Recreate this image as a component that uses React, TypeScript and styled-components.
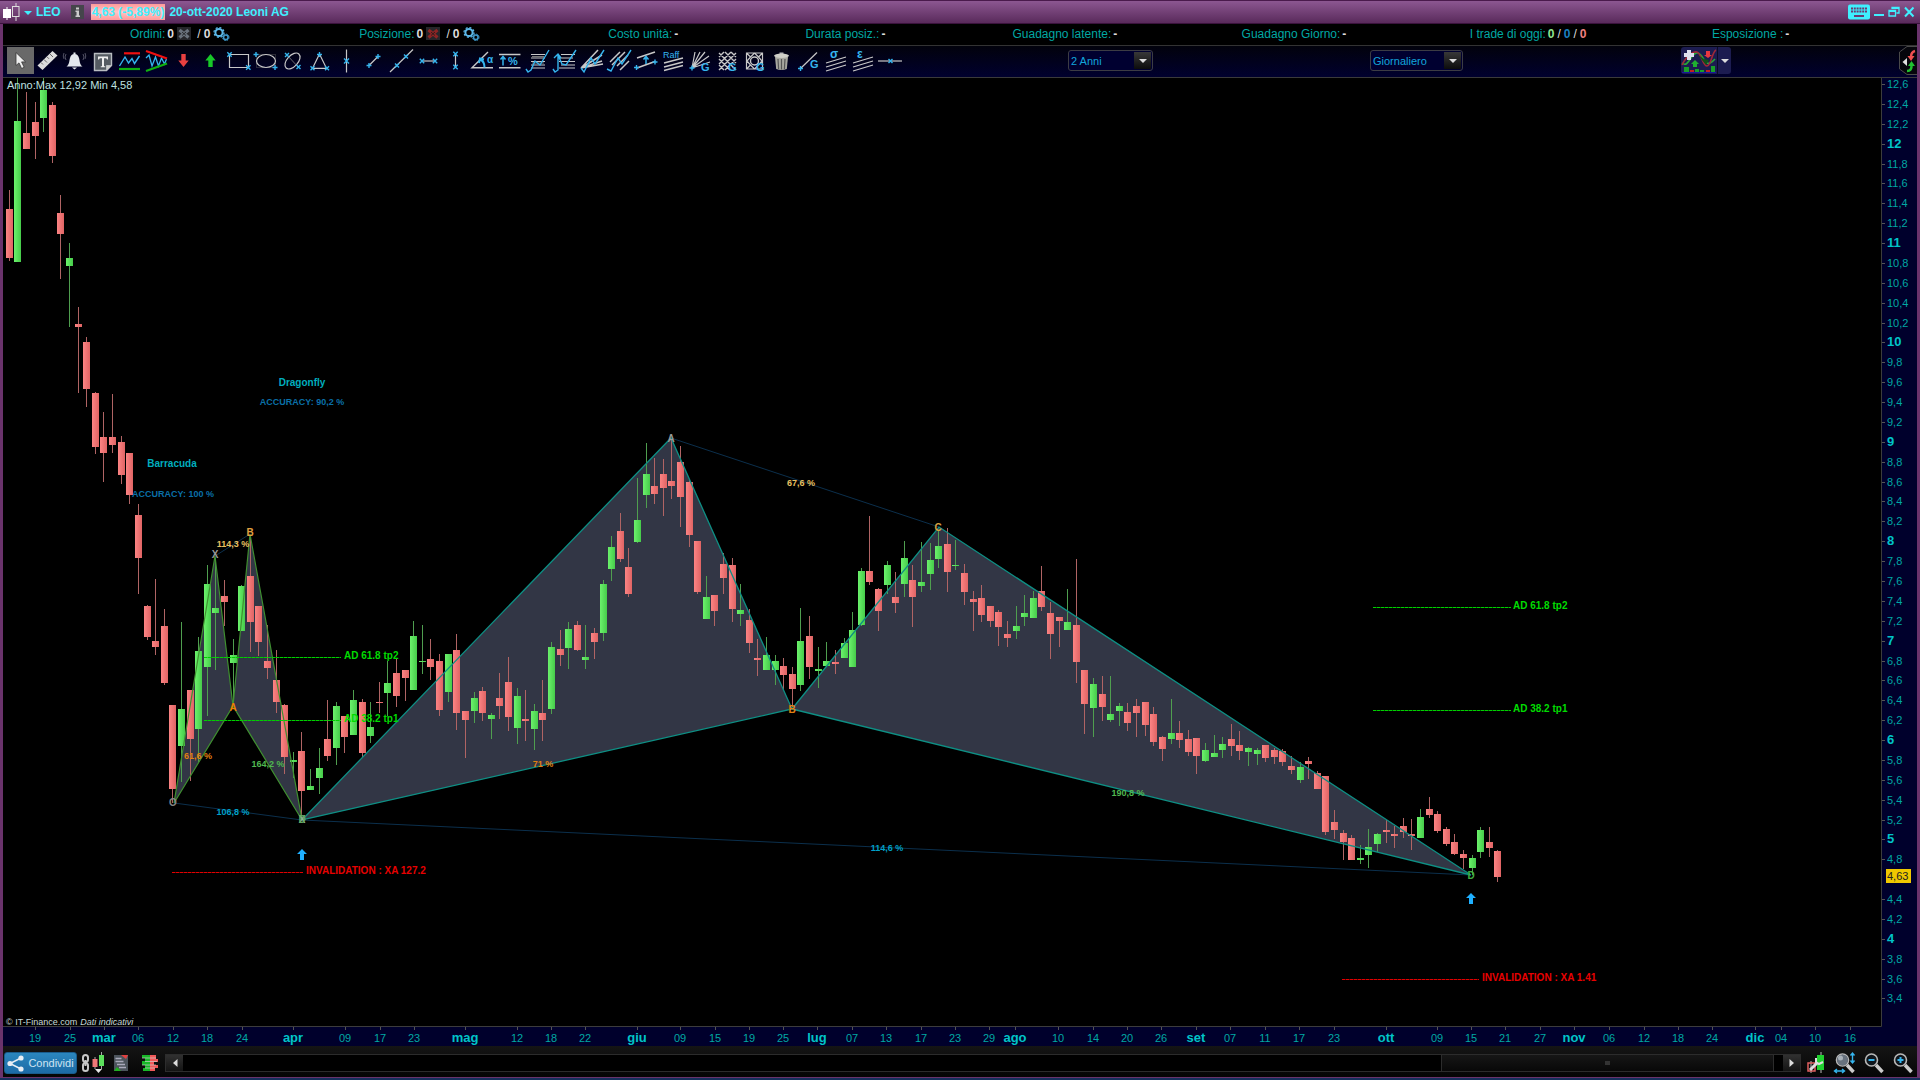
import React from 'react';
import styled, { createGlobalStyle, css } from 'styled-components';

const GlobalStyle = createGlobalStyle`
  * { box-sizing: border-box; }
  body { margin: 0; background: #000; font-family: "Liberation Sans", Arial, sans-serif; }
  button, select { font-family: inherit; }
`;

const palette = {
  teal: '#00a8a4',
  cyan: '#3ff0ff',
  grey: '#c8c8c8',
  blue: '#35b5ee',
};

/* ---------- frame ---------- */

const Desktop = styled.div`
  display: flex;
  flex-direction: column;
  min-height: 100vh;
  background: #16305c;
  padding-bottom: 2px;
`;

const Frame = styled.main`
  flex: 1;
  display: flex;
  flex-direction: column;
  border: solid #6a336c;
  border-width: 0 3px 1px 3px;
  background: #000;
`;

const TitleBar = styled.header`
  display: flex;
  align-items: center;
  height: 24px;
  margin: 0 -3px;
  padding: 0 5px 0 3px;
  background: linear-gradient(#8c5791, #592a5b);
  border-top: 1px solid #4a1a4c;
  border-bottom: 1px solid #3a123c;
  color: ${palette.cyan};
  font-size: 12px;
  font-weight: bold;
`;

const PlainButton = styled.button`
  display: inline-flex;
  align-items: center;
  justify-content: center;
  padding: 0;
  border: 0;
  background: none;
  color: inherit;
`;

const Symbol = styled.h1`
  margin: 0 10px 0 3px;
  font-size: 12px;
`;

const Change = styled.strong`
  margin: 0 4px 0 7px;
  padding: 0 1px;
  line-height: 16px;
  background: linear-gradient(#ff9a9a, #ffc4c4, #ff9a9a);
`;

const WindowButtons = styled.div`
  display: flex;
  align-items: center;
  gap: 3px;
  margin-left: auto;
`;

/* ---------- statistics row ---------- */

const StatRow = styled.dl`
  display: grid;
  grid-template-columns: 229fr 249fr 197fr 207fr 229fr 228fr 242fr 205fr;
  align-items: center;
  height: 22px;
  margin: 0;
  padding: 0 0 2px 127px;
  border-bottom: 1px solid #333;
  font-size: 12px;
  white-space: nowrap;
`;

const Stat = styled.div`
  display: flex;
  align-items: center;
  gap: 2px;
`;

const StatName = styled.dt`
  color: ${palette.teal};
`;

const StatValue = styled.dd`
  display: flex;
  align-items: center;
  gap: 3px;
  margin: 0;
  color: #ddd;
`;

const Count = styled.b<{ $color?: string }>`
  color: ${(p) => p.$color ?? '#ddd'};
`;

/* ---------- toolbar ---------- */

const Toolbar = styled.div`
  display: flex;
  align-items: center;
  height: 32px;
  padding: 0 0 2px 4px;
  background: linear-gradient(#02020c, #00002e);
  border-bottom: 1px solid #3a3a3a;
`;

const Tools = styled.div`
  display: flex;
  justify-content: space-between;
  width: 897px;
`;

const Tool = styled(PlainButton)<{ $active?: boolean }>`
  width: 27px;
  height: 27px;
  ${(p) => p.$active && css`background: #696969;`}

  svg { overflow: visible; }
`;

const Spacer = styled.div<{ $grow: number }>`
  flex: ${(p) => p.$grow} 1 0;
`;

const PickerBox = styled.div<{ $width: number }>`
  position: relative;
  width: ${(p) => p.$width}px;
  height: 21px;
`;

const Picker = styled.select`
  appearance: none;
  width: 100%;
  height: 100%;
  padding: 0 20px 0 2px;
  border: 1px solid #3c3c44;
  border-radius: 3px;
  background: #000030;
  color: #12a5dc;
  font-size: 11px;
`;

const PickerArrow = styled.span`
  position: absolute;
  top: 2px;
  right: 2px;
  display: grid;
  place-items: center;
  width: 17px;
  height: 17px;
  background: linear-gradient(#383838, #0c0c0c);
  pointer-events: none;
`;

const Triangle = styled.i`
  border: 4px solid transparent;
  border-top-color: #ddd;
  border-bottom: 0;
`;

const IndicatorGroup = styled.div`
  display: flex;
  height: 27px;
  border-radius: 3px;
  overflow: hidden;
  background: #1c1c50;
`;

const IndicatorMore = styled(PlainButton)`
  width: 14px;
  border-left: 1px solid #0a0a24;
`;

/* ---------- chart ---------- */

const ChartArea = styled.section`
  flex: 1;
  display: flex;
`;

const ChartSvg = styled.svg`
  flex: 1;
  width: 100%;
  min-width: 0;
  display: block;
  font-size: 11px;
`;

/* ---------- bottom bar ---------- */

const BottomBar = styled.footer`
  display: flex;
  align-items: center;
  height: 31px;
  padding: 3px 0 0 1px;
  background: linear-gradient(#151515, #050505);
`;

const ShareButton = styled(PlainButton)`
  gap: 4px;
  width: 73px;
  height: 22px;
  margin-right: 4px;
  border: 1px solid #1a5c8c;
  border-radius: 3px;
  background: linear-gradient(#2b86bd, #1c6ba6);
  color: #cfe4f2;
  font-size: 11px;
`;

const BarTool = styled(PlainButton)<{ $width?: number }>`
  width: ${(p) => p.$width ?? 29}px;
  height: 28px;
`;

const ScrollBar = styled.div`
  flex: 1;
  display: flex;
  height: 18px;
  border: 1px solid #2c2c2c;
  background: #000;
`;

const ScrollButton = styled(PlainButton)`
  width: 17px;
  background: linear-gradient(#303030, #141414);
`;

const ScrollTrack = styled.div`
  flex: 1;
  display: flex;
`;

const ScrollThumb = styled.div`
  display: grid;
  place-items: center;
  flex: 331;
  border: solid #2c2c2c;
  border-width: 0 1px;
  background: linear-gradient(#161616, #080808);
`;

const Grip = styled.i`
  width: 5px;
  height: 4px;
  background: #333;
`;

/* ---------- icons ---------- */

const W = palette.grey;
const C = palette.blue;

const Cross = ({ x, y, r = 2 }: { x: number; y: number; r?: number }) => (
  <path d={`M${x - r} ${y - r}l${2 * r} ${2 * r}M${x - r} ${y + r}l${2 * r} ${-2 * r}`} stroke={C} strokeWidth="1.4" />
);
const Plus = ({ x, y, r = 2.5 }: { x: number; y: number; r?: number }) => (
  <path d={`M${x - r} ${y}h${2 * r}M${x} ${y - r}v${2 * r}`} stroke={C} strokeWidth="1.4" />
);
const Line = ({ d, c = W, w = 1.2 }: { d: string; c?: string; w?: number }) => (
  <path d={d} stroke={c} strokeWidth={w} fill="none" />
);
const Mark = ({ x, y, s = 11, children }: { x: number; y: number; s?: number; children: string }) => (
  <text x={x} y={y} fill={C} fontSize={s} fontWeight="bold">{children}</text>
);

const tools: { name: string; art: React.ReactNode }[] = [
  { name: 'Cursore', art: <path d="M9 5.5v13l3-2.6 2.6 5.6 2.6-1.2-2.6-5.4h4z" fill="#eee" stroke="#333" strokeWidth=".8" /> },
  { name: 'Righello', art: <><path d="M3.5 18.5L18.5 4l5 4.5L8.5 23z" fill="#ddd" /><Line d="M7 15.5l2 2M10 12.5l3 3M13 9.8l2 2M16 7l3 3" c="#666" w={1} /></> },
  { name: 'Allarme', art: <><path d="M5.5 19.5c3-2 2.500-5 3.500-8.500.8-2.800 2-4 4.500-4s3.700 1.200 4.500 4c1 3.500.5 6.500 3.500 8.500z" fill="#e4e8ec" /><path d="M11 20.500h5l-2.500 2zM12.500 5.500h2v2h-2z" fill="#e4e8ec" /><Line d="M5 7q-2 3 0 6M22 7q2 3 0 6M3 6q-1.500 3 0 6M24 6q1.500 3 0 6" c="#667" w={.8} /></> },
  { name: 'Testo', art: <><path d="M5.500 6.500h17v12l-5 5h-12z" fill="#555b62" stroke="#b8bcc0" strokeWidth="1.400" /><path d="M17.500 23.500v-5h5" fill="#ccc" stroke="#b8bcc0" /><path d="M9 9.500h10v3h-1l-.8-1.300H15v8h1.200v1h-4.400v-1H13v-8h-2.200L10 12.500H9z" fill="#eee" /></> },
  { name: 'Supporti e resistenze', art: <><Line d="M3.500 19L9 10l3.500 6 3.500-4.500 2.500 5L23.500 9" c={C} w={1.400} /><Line d="M8 6.300h16" c="#f01010" w={2.200} /><Line d="M3 22h21" c="#10b010" w={2.200} /></> },
  { name: 'Canale', art: <><Line d="M3 11l3-3 3 11 3.500-9 3 9 3-8 3 6 2-5" c={C} w={1.300} /><Line d="M3 4l21 7.500" c="#f01010" w={2.200} /><Line d="M3 24l21-7.500" c="#10b010" w={2.200} /></> },
  { name: 'Freccia giù', art: <path d="M11.300 7h4.400v6.500h3L13.500 20l-5.200-6.500h3z" fill="#e84040" /> },
  { name: 'Freccia su', art: <path d="M11.300 20h4.400v-6.500h3L13.500 7l-5.200 6.500h3z" fill="#18c828" /> },
  { name: 'Rettangolo', art: <><Line d="M4.500 7.500h19v13h-19z" /><Cross x={4.500} y={7.500} r={2.200} /><Cross x={23.300} y={20.500} r={2.200} /></> },
  { name: 'Ellisse', art: <><path d="M4.500 7.500h19v13h-19z" fill="none" stroke="#555" strokeDasharray="1 1" /><ellipse cx="14" cy="14" rx="9.500" ry="6.500" fill="none" stroke={W} strokeWidth="1.200" /><Plus x={4} y={7.500} /><Plus x={23} y={20.500} /></> },
  { name: 'Ellisse inclinata', art: <><ellipse cx="13.500" cy="14" rx="9.500" ry="5.500" transform="rotate(-48 13.500 14)" fill="none" stroke={W} strokeWidth="1.200" /><Line d="M8 8l12 13" c="#888" w={.8} /><Cross x={8} y={8} /><Cross x={19.500} y={20} /></> },
  { name: 'Triangolo', art: <><Line d="M13.500 7L6.500 21.300h14z" /><Plus x={13.500} y={7.500} /><Cross x={6.500} y={21.300} /><Cross x={21} y={21.300} /></> },
  { name: 'Retta verticale', art: <><Line d="M13.500 2.500v23" /><Cross x={13.500} y={14} r={2.500} /></> },
  { name: 'Segmento', art: <><Line d="M9 18.500l9-9" /><Plus x={9} y={18.500} /><Plus x={18} y={9.500} /></> },
  { name: 'Retta', art: <><Line d="M2 25L25 2.500" /><Cross x={9} y={18.500} /><Cross x={18} y={9.500} /></> },
  { name: 'Segmento orizzontale', art: <><Line d="M7 14h14" /><Cross x={7} y={14} r={2.200} /><Cross x={20} y={14} r={2.200} /></> },
  { name: 'Segmento verticale', art: <><Line d="M13.500 7v14" /><Cross x={13.500} y={7} r={2.200} /><Cross x={13.500} y={20} r={2.200} /></> },
  { name: 'Angolo', art: <><Line d="M19 5L3 20.700h21" w={1.400} /><path d="M11 12.500q4.500 1.500 4.500 8M10 16l1-4.500 4 1" stroke={C} strokeWidth="2" fill="none" /><Mark x={18} y={16} s={10}>α</Mark></> },
  { name: 'Variazione percentuale', art: <><Line d="M3 7.500h21.500M3 20.700h21.500" w={1.400} /><Line d="M7 18.500V11M4.500 12.500L7 9.500l2.500 3" c={C} w={1.500} /><Mark x={12} y={18} s={11}>%</Mark></> },
  { name: 'Ritracciamenti', art: <><Line d="M7 7.500h14M7 11h14M7 14.500h14M7 18h14M7 21h14" w={1} /><Line d="M8 9.500h12M8 16h12" c="#777" w={1} /><Line d="M2 22l2 3 3-2 4-9 5 4 9-15" c={C} w={1.400} /></> },
  { name: 'Estensioni', art: <><Line d="M10 7.500h14M8 11h14M8 14.500h16M10 18h14M8 21h16" w={1} /><Line d="M2 22l2 3 3-2V8l4 9 4 1L25 3M3 11l4-4 3 4" c={C} w={1.400} /></> },
  { name: 'Ventaglio', art: <><Line d="M3 21L20 3M3 21L24 8M3 21l21-7M3 21l22-4" w={1.500} /><Line d="M3 21l3 4 7-14 4 6 9-14" c={C} w={1.400} /></> },
  { name: 'Canale parallelo', art: <><Line d="M5 15L15 5M7 18L20 5M12 19L23 8M15 23l9-9" w={1.500} /><Line d="M2 22l4 2 7-13 4 6 9-14" c={C} w={1.400} /></> },
  { name: 'Trasla canale', art: <><Line d="M5 11l18-6M5 21l18-6.500" w={1.500} /><Line d="M14 17v-6M11.500 12.500l2.500-3 2.500 3" c={C} w={1.500} /><Plus x={4.500} y={20.500} /><Plus x={23} y={15} /></> },
  { name: 'Raff', art: <><text x="3" y="11" fill={C} fontSize="9">Raff</text><Line d="M4 16l19-5M4 20l19-5M4 23.500l19-5" w={1.400} /></> },
  { name: 'Ventaglio di Gann', art: <><Line d="M5 21L8 5M5 21l8-16M5 21L18 5M5 21l17-12M5 21l18-6" w={1.200} /><Plus x={5} y={21} /><Mark x={14} y={24}>G</Mark></> },
  { name: 'Griglia di Gann', art: <><Line d="M5 10l5-5M5 17L17 5M5 23L22 6M11 23L22 12M5 6l17 17M11 5l11 11M5 12l11 11M17 5l5 5M5 18l5 5" w={1.400} /><Mark x={14} y={24}>G</Mark></> },
  { name: 'Quadrato di Gann', art: <><Line d="M5.500 6h16v16h-16zM5.500 6l4 4M21.500 6l-4 4M5.500 22l4-4M13.500 6l4 4 3.500 4-3.500 4-4 4-4-4-3.500-4 3.500-4z" w={1.200} /><circle cx="13.500" cy="14" r="4" fill="none" stroke={W} strokeWidth="1.400" /><Mark x={15} y={24}>G</Mark></> },
  { name: 'Elimina', art: <><path d="M7 10h13l-1.200 12q-5.300 2-10.600 0z" fill="#a8a8a0" /><ellipse cx="13.500" cy="8.800" rx="7.500" ry="2.200" fill="#d0d0c8" /><path d="M11.500 5.500h4v1.500h-4z" fill="#bbb" /><Line d="M10 12l.6 10M13.500 12v10.500M17 12l-.6 10" c="#555" /></> },
  { name: 'Retta di Gann', art: <><Line d="M5.500 21.500L22 5.500" /><Plus x={5.500} y={21.500} /><Mark x={15} y={21}>G</Mark></> },
  { name: 'Deviazione standard', art: <><Mark x={7} y={11} s={12}>σ</Mark><Line d="M3 16l20-6M3 20l20-6M3 24l20-6" w={1.300} /></> },
  { name: 'Errore standard', art: <><Mark x={7} y={11} s={12}>ε</Mark><Line d="M3 16l20-6M3 20l20-6M3 24l20-6" w={1.300} /></> },
  { name: 'Retta orizzontale', art: <><Line d="M1 14h24" /><Cross x={13.500} y={14} /></> },
];

const Gears = () => (
  <svg width="17" height="14" viewBox="0 0 17 14" aria-hidden="true">
    <circle cx="6" cy="5.500" r="3.600" fill="none" stroke="#5cb8e8" strokeWidth="2" />
    <circle cx="6" cy="5.500" r="5" fill="none" stroke="#5cb8e8" strokeWidth="1.200" strokeDasharray="2 1.900" />
    <circle cx="12.800" cy="10.300" r="2.300" fill="none" stroke="#3f97c8" strokeWidth="1.600" />
    <circle cx="12.800" cy="10.300" r="3.300" fill="none" stroke="#3f97c8" strokeDasharray="1.400 1.200" />
  </svg>
);

const CancelIcon = ({ color }: { color: string }) => (
  <svg width="14" height="13" viewBox="0 0 14 13" aria-hidden="true">
    <rect width="14" height="13" fill="#26262a" />
    <path d="M2.500 3l9 7.500M2.500 10.500l9-7.500" stroke={color} strokeWidth="3.200" />
    <path d="M5 5l4 3.500M5 8.500L9 5" stroke="#1a1a1c" strokeWidth=".8" />
  </svg>
);

/* ---------- chart data ---------- */

/* direction, high, body top, body bottom, low */
type Bar = [0 | 1, number, number, number, number];

const bars: Bar[] = [
  [0,190,209,258,261],[1,78,121,262,262],[0,92,133,149,149],[0,102,122,136,159],[1,78,90,118,132],[0,102,105,156,163],
  [0,195,213,234,279],[1,243,258,266,327],[0,307,324,327,393],[0,337,342,389,407],[0,392,393,447,454],[0,412,437,453,482],
  [0,394,437,445,453],[0,436,442,475,484],[0,453,453,495,504],[0,504,515,558,594],[0,605,606,637,640],[0,579,641,647,655],
  [0,609,626,683,685],[0,705,705,789,803],[1,622,709,746,782],[0,690,690,739,781],[1,637,651,729,762],[1,565,584,667,716],
  [1,558,608,613,670],[0,580,596,602,626],[1,639,655,663,703],[1,585,586,631,631],[0,537,576,622,652],[0,606,606,642,656],
  [0,625,661,668,679],[0,650,680,702,713],[0,704,705,757,774],[1,752,760,762,778],[0,732,751,791,818],[1,769,786,790,790],
  [1,748,768,778,794],[0,700,739,756,761],[1,702,706,748,765],[0,716,716,737,753],[1,690,700,735,735],[0,699,702,753,757],
  [1,702,727,736,743],[0,682,702,703,713],[1,661,683,693,716],[0,659,673,696,707],[0,670,670,678,701],[1,621,636,690,690],
  [1,625,661,662,674],[0,639,659,667,680],[0,654,661,710,716],[1,654,654,692,702],[0,634,650,713,730],[0,711,711,720,758],
  [1,692,698,711,723],[0,687,691,713,721],[1,713,715,719,739],[0,673,698,706,719],[0,657,682,717,731],[1,688,696,728,744],
  [0,690,719,721,741],[1,704,711,729,750],[0,680,713,720,741],[1,642,647,709,714],[0,630,649,655,666],[1,622,629,648,669],
  [0,621,625,650,651],[1,625,657,660,669],[0,628,633,642,659],[1,580,584,633,641],[1,536,547,569,581],[0,513,531,559,562],
  [0,548,567,594,597],[1,478,520,542,543],[1,443,474,495,508],[0,458,486,494,504],[0,459,474,488,516],[0,440,481,486,499],
  [0,446,462,497,527],[0,480,482,535,547],[0,541,541,592,594],[1,576,597,619,619],[0,595,595,611,626],[0,553,564,578,594],
  [0,558,565,609,622],[1,584,610,614,626],[0,609,620,643,653],[0,639,658,660,676],[1,637,655,670,670],[1,655,661,670,685],
  [0,658,666,675,690],[0,667,674,689,707],[1,608,641,685,691],[0,616,636,667,679],[1,647,669,671,688],[1,642,661,666,666],
  [0,650,662,664,674],[1,638,643,658,658],[1,612,630,667,667],[1,568,571,625,626],[0,516,571,582,585],[0,588,589,611,631],
  [1,561,565,585,594],[0,572,597,603,613],[1,541,558,584,597],[0,565,580,597,627],[1,542,582,586,592],[1,543,560,574,590],
  [1,530,546,559,568],[0,528,544,572,592],[1,540,565,566,570],[0,564,573,592,605],[0,591,599,602,631],[0,585,598,615,622],
  [0,606,606,621,627],[0,610,612,627,646],[0,621,634,638,647],[1,606,626,631,639],[1,595,613,617,626],[1,591,598,618,618],
  [0,566,591,607,611],[0,602,613,634,659],[0,617,617,621,647],[1,589,622,630,630],[0,559,625,662,683],[0,670,670,704,734],
  [1,678,684,708,737],[0,676,694,707,721],[1,676,714,720,722],[1,703,706,711,726],[0,703,712,723,731],[0,699,706,713,737],
  [0,702,702,725,736],[0,707,714,742,746],[0,736,737,749,761],[1,699,733,739,744],[0,721,733,740,748],[0,730,739,752,756],
  [0,738,738,756,774],[1,743,750,761,762],[1,735,753,757,757],[1,737,744,750,758],[0,724,739,746,756],[0,731,745,751,760],
  [1,747,748,752,766],[1,748,750,754,765],[0,745,745,758,762],[0,748,750,757,764],[0,749,751,762,766],[0,756,766,770,774],
  [1,762,767,780,783],[0,757,761,764,779],[0,771,773,789,789],[0,776,776,832,835],[0,810,822,830,839],[0,830,833,842,860],
  [0,835,838,860,860],[1,845,858,860,864],[1,829,847,855,868],[1,833,834,844,852],[0,820,830,832,843],[0,826,834,836,848],
  [0,818,826,832,838],[0,819,834,836,850],[1,809,817,838,838],[0,797,809,815,818],[0,811,814,831,833],[0,827,829,844,846],
  [0,834,842,854,855],[0,850,854,858,869],[1,855,858,868,875],[1,827,830,852,858],[0,827,842,848,857],[0,850,851,877,882],
];

const dates: [string, number][] = [
  ['19',35],['25',70],['mar',104],['06',138],['12',173],['18',207],['24',242],['apr',293],['09',345],['17',380],['23',414],
  ['mag',465],['12',517],['18',551],['22',585],['giu',637],['09',680],['15',715],['19',749],['25',783],['lug',817],['07',852],
  ['13',886],['17',921],['23',955],['29',989],['ago',1015],['10',1058],['14',1093],['20',1127],['26',1161],['set',1196],
  ['07',1230],['11',1265],['17',1299],['23',1334],['ott',1386],['09',1437],['15',1471],['21',1505],['27',1540],['nov',1574],
  ['06',1609],['12',1644],['18',1678],['24',1712],['dic',1755],['04',1781],['10',1815],['16',1850],
];

const priceY = (price: number) => Math.round(84 + (12.6 - price) * 99.4);
const prices = Array.from({ length: 47 }, (_, i) => (126 - 2 * i) / 10);

type Note = { x: number; y: number; text: string; color: string; size?: number; anchor?: 'start' | 'middle' };
const notes: Note[] = [
  { x: 302, y: 386, text: 'Dragonfly', color: '#00aebe', size: 10 },
  { x: 302, y: 405, text: 'ACCURACY: 90,2 %', color: '#0a70a8' },
  { x: 172, y: 467, text: 'Barracuda', color: '#00aebe', size: 10 },
  { x: 173, y: 497, text: 'ACCURACY: 100 %', color: '#0a70a8' },
  { x: 233, y: 547, text: '114,3 %', color: '#e8c060' },
  { x: 215, y: 558, text: 'X', color: '#999', size: 10 },
  { x: 250, y: 536, text: 'B', color: '#e0a040', size: 10 },
  { x: 233, y: 711, text: 'A', color: '#f08000', size: 10 },
  { x: 173, y: 806, text: 'O', color: '#888', size: 10 },
  { x: 302, y: 823, text: 'X', color: '#90b090', size: 10 },
  { x: 302, y: 823, text: 'D', color: '#60a860', size: 10 },
  { x: 198, y: 759, text: '61,6 %', color: '#e08010' },
  { x: 268, y: 767, text: '164,2 %', color: '#50b850' },
  { x: 233, y: 815, text: '106,8 %', color: '#00a0c8' },
  { x: 543, y: 767, text: '71 %', color: '#e08010' },
  { x: 671, y: 442, text: 'A', color: '#999', size: 10 },
  { x: 792, y: 713, text: 'B', color: '#e08010', size: 10 },
  { x: 938, y: 531, text: 'C', color: '#d8a040', size: 10 },
  { x: 1471, y: 879, text: 'D', color: '#40b040', size: 10 },
  { x: 801, y: 486, text: '67,6 %', color: '#e8c060' },
  { x: 887, y: 851, text: '114,6 %', color: '#00a0c8' },
  { x: 1128, y: 796, text: '190,8 %', color: '#50b850' },
  { x: 344, y: 659, text: 'AD 61.8 tp2', color: '#00dc00', size: 10, anchor: 'start' },
  { x: 344, y: 722, text: 'AD 38.2 tp1', color: '#00dc00', size: 10, anchor: 'start' },
  { x: 1513, y: 609, text: 'AD 61.8 tp2', color: '#00dc00', size: 10, anchor: 'start' },
  { x: 1513, y: 712, text: 'AD 38.2 tp1', color: '#00dc00', size: 10, anchor: 'start' },
  { x: 306, y: 874, text: 'INVALIDATION : XA 127.2', color: '#e80000', size: 10, anchor: 'start' },
  { x: 1482, y: 981, text: 'INVALIDATION : XA 1.41', color: '#e80000', size: 10, anchor: 'start' },
];

const levels = [
  { x1: 204, x2: 341, y: 657, color: '#00d000' },
  { x1: 204, x2: 341, y: 720, color: '#00d000' },
  { x1: 1373, x2: 1511, y: 607, color: '#00d000' },
  { x1: 1373, x2: 1511, y: 710, color: '#00d000' },
  { x1: 172, x2: 303, y: 872, color: '#e00000' },
  { x1: 1342, x2: 1479, y: 979, color: '#e00000' },
];

const smallWings = 'M174 803L215 556 233 706zM233 706L250 534 302 820z';
const largeWings = 'M302 820L671 438 792 709zM792 709L939 527 1471 875z';

const Candle = ({ bar, index }: { bar: Bar; index: number }) => {
  const [up, high, top, bottom, low] = bar;
  const x = Math.floor(9.33 + index * 8.605) + 0.5;
  return (
    <g>
      <path d={`M${x} ${high}V${low}`} stroke={up ? '#4f9e4f' : '#b06464'} />
      <rect x={x - 3.5} y={top} width="7" height={Math.max(1, bottom - top)} fill={up ? 'url(#up)' : 'url(#down)'} />
    </g>
  );
};

const Chart = () => (
  <ChartSvg viewBox="3 78 1914 968" preserveAspectRatio="xMinYMin meet" role="img" aria-label="Grafico Leoni AG">
    <defs>
      <linearGradient id="up"><stop offset="0" stopColor="#6cf26c" /><stop offset="1" stopColor="#46cc4a" /></linearGradient>
      <linearGradient id="down"><stop offset="0" stopColor="#fc8484" /><stop offset="1" stopColor="#e06464" /></linearGradient>
    </defs>
    <path d="M1882 78h35v968H3v-19h1879z" fill="#00002c" />
    <path d="M1881.500 78v948.500H3" fill="none" stroke="#3c3c3c" />
    <path d={smallWings + largeWings} fill="#323645" />
    <path d="M174 803L302 820 1471 875M215 556L250 534M671 438L939 527" fill="none" stroke="#0b2f4c" />
    {bars.map((bar, i) => <Candle key={i} bar={bar} index={i} />)}
    <path d={smallWings} fill="none" stroke="#3f9030" strokeWidth="1.200" />
    <path d={largeWings} fill="none" stroke="#0e8f84" strokeWidth="1.300" />
    {levels.map((l) => (
      <g key={`${l.x1}-${l.y}`} stroke={l.color}>
        <path d={`M${l.x1} ${l.y + 0.5}H${l.x2}`} opacity=".5" />
        <path d={`M${l.x1} ${l.y + 0.5}H${l.x2}`} strokeDasharray="3 1" />
      </g>
    ))}
    {notes.map((n) => (
      <text key={`${n.text}-${n.x}-${n.y}`} x={n.x} y={n.y} fill={n.color} fontSize={n.size ?? 9} fontWeight="bold" textAnchor={n.anchor ?? 'middle'}>
        {n.text}
      </text>
    ))}
    {[[302, 849], [1471, 893]].map(([x, y]) => (
      <path key={x} d={`M${x} ${y}l5 5h-3v6h-4v-6h-3z`} fill="#1fb0ff" />
    ))}
    <text x="7" y="89" fill="#bfe0e0">Anno:Max 12,92 Min 4,58</text>
    <text x="6" y="1025" fill="#c8dada" fontSize="9">© IT-Finance.com<tspan dx="3" fontStyle="italic">Dati indicativi</tspan></text>
    {prices.map((p) => {
      const whole = Number.isInteger(p);
      return p === 4.6 ? null : (
        <g key={p}>
          <path d={`M1882 ${priceY(p) + 0.5}h3`} stroke="#555" />
          <text x="1887" y={priceY(p) + 4} fill={whole ? '#00c4c8' : palette.teal} fontSize={whole ? 13 : 11} fontWeight={whole ? 'bold' : 'normal'}>
            {String(p).replace('.', ',')}
          </text>
        </g>
      );
    })}
    <rect x="1886" y="869" width="25" height="14" fill="#f0c800" />
    <text x="1887" y="880" fill="#222">4,63</text>
    {dates.map(([label, x]) => {
      const month = label.length > 2;
      return (
        <g key={x}>
          <path d={`M${x + 0.5} 1027v3`} stroke="#555" />
          <text x={x} y="1042" textAnchor="middle" fill={month ? '#00c4c8' : palette.teal} fontSize={month ? 13 : 11} fontWeight={month ? 'bold' : 'normal'}>
            {label}
          </text>
        </g>
      );
    })}
  </ChartSvg>
);

/* ---------- page sections ---------- */

const Title = () => (
  <TitleBar>
    <svg width="18" height="18" viewBox="0 0 18 18" aria-hidden="true">
      <path d="M4 4v13" stroke="#fff" /><rect x="0" y="6" width="8" height="9" fill="#fff" />
      <path d="M13 0v3M13 14v4" stroke="#ddd" /><rect x="9.500" y="3.500" width="6.500" height="10" fill="none" stroke="#ddd" />
    </svg>
    <PlainButton aria-label="Menu strumento">
      <svg width="12" height="14" viewBox="0 0 12 14"><path d="M3 6h8l-4 4z" fill={palette.cyan} /></svg>
    </PlainButton>
    <Symbol>LEO</Symbol>
    <PlainButton aria-label="Informazioni">
      <svg width="13" height="14" viewBox="0 0 13 14"><rect width="13" height="14" fill="#45454b" /><path d="M5 2.500h3v2H5zM4.500 5.500H8v5h1V12H4.500v-1.500h1V7h-1z" fill="#ccc" /></svg>
    </PlainButton>
    <Change>4,63 (-5,89%)</Change>
    <span>20-ott-2020 Leoni AG</span>
    <WindowButtons>
      <PlainButton aria-label="Tastiera">
        <svg width="22" height="16" viewBox="0 0 22 16"><rect y=".5" width="22" height="15" rx="2" fill={palette.cyan} /><path d="M3 4.500h16M3 7.500h16" stroke="#6a3a70" strokeWidth="2" strokeDasharray="2 .8" /><path d="M6 12h10" stroke="#6a3a70" strokeWidth="2" /></svg>
      </PlainButton>
      <PlainButton aria-label="Riduci a icona">
        <svg width="12" height="14" viewBox="0 0 12 14"><path d="M1 10h10" stroke={palette.cyan} strokeWidth="2" /></svg>
      </PlainButton>
      <PlainButton aria-label="Ripristina">
        <svg width="12" height="12" viewBox="0 0 12 12"><path d="M4 3V1.500h7V7H8.500M1 4.500h6.500v5.500H1z" fill="none" stroke={palette.cyan} strokeWidth="1.300" /><path d="M4 2h7M1 5h6.500" stroke={palette.cyan} strokeWidth="2" /></svg>
      </PlainButton>
      <PlainButton aria-label="Chiudi">
        <svg width="12" height="12" viewBox="0 0 12 12"><path d="M2 1.500l8.500 9M10.500 1.500L2 10.500" stroke={palette.cyan} strokeWidth="2" /></svg>
      </PlainButton>
    </WindowButtons>
  </TitleBar>
);

const OrderCount = ({ cancel, label }: { cancel: string; label: string }) => (
  <>
    <Count>0</Count>
    <PlainButton aria-label={`Annulla ${label}`}><CancelIcon color={cancel} /></PlainButton>
    <span>&nbsp;/</span>
    <Count>0</Count>
    <PlainButton aria-label={`Impostazioni ${label}`}><Gears /></PlainButton>
  </>
);

const stats: [string, React.ReactNode][] = [
  ['Ordini:', <OrderCount cancel="#6a727c" label="ordini" />],
  ['Posizione:', <OrderCount cancel="#8c2424" label="posizione" />],
  ['Costo unità:', <b>-</b>],
  ['Durata posiz.:', <b>-</b>],
  ['Guadagno latente:', <b>-</b>],
  ['Guadagno Giorno:', <b>-</b>],
  ['I trade di oggi:', <><Count $color="#90e890">0</Count>/<Count $color="#1a80c0">0</Count>/<Count $color="#f08080">0</Count></>],
  ['Esposizione :', <b>-</b>],
];

const Dropdown = ({ label, width, options }: { label: string; width: number; options: string[] }) => (
  <PickerBox $width={width}>
    <Picker aria-label={label}>{options.map((o) => <option key={o}>{o}</option>)}</Picker>
    <PickerArrow><Triangle /></PickerArrow>
  </PickerBox>
);

const Zoom = ({ children }: { children?: React.ReactNode }) => (
  <svg width="24" height="24" viewBox="0 0 24 24" aria-hidden="true">
    <path d="M14 14l6.500 7" stroke="#ccc" strokeWidth="3.500" />
    <circle cx="9.500" cy="9" r="6" fill="#10161c" stroke="#b8b8b8" strokeWidth="1.600" />
    {children}
  </svg>
);

export default function App() {
  return (
    <Desktop>
      <GlobalStyle />
      <Frame>
        <Title />
        <StatRow>
          {stats.map(([name, value]) => (
            <Stat key={name}><StatName>{name}</StatName><StatValue>{value}</StatValue></Stat>
          ))}
        </StatRow>
        <Toolbar>
          <Tools>
            {tools.map((t, i) => (
              <Tool key={t.name} $active={i === 0} aria-label={t.name}>
                <svg width="27" height="27" viewBox="0 0 27 27">{t.art}</svg>
              </Tool>
            ))}
          </Tools>
          <Spacer $grow={164} />
          <Dropdown label="Periodo" width={85} options={['2 Anni', '1 Anno', '6 Mesi']} />
          <Spacer $grow={217} />
          <Dropdown label="Intervallo" width={93} options={['Giornaliero', 'Settimanale', 'Mensile']} />
          <Spacer $grow={218} />
          <IndicatorGroup>
            <PlainButton aria-label="Aggiungi indicatore">
              <svg width="36" height="27" viewBox="0 0 36 27">
                <path d="M1 16C8 22 10 4 17 6s6 18 17 6" fill="none" stroke="#28a838" strokeWidth="1.600" />
                <path d="M1 18C6 8 12 4 16 5s6 14 10 14 5-14 9-16" fill="none" stroke="#a02838" strokeWidth="1.600" />
                <path d="M17 8l8 10 3-5-5-1z" fill="#105018" />
                <path d="M12 20v-3h-2l4-4 4 4h-2v3z" fill="#20b030" />
                <path d="M25 4h4v4h2l-4 3-4-3h2z" fill="#e83840" />
                <path d="M3 20h5v5H3zM14 22h4v3h-4zM19 23h4v2h-4zM30 19h4v6h-4z" fill="#18a028" />
                <path d="M9 23h4v2H9zM25 23h4v2h-4z" fill="#c02020" />
                <path d="M1 25.500h34" stroke="#1818a0" />
                <path d="M6 3h4v3h3v4h-3v3H6v-3H3V6h3z" fill="#dde0ee" />
              </svg>
            </PlainButton>
            <IndicatorMore aria-label="Altri indicatori"><Triangle /></IndicatorMore>
          </IndicatorGroup>
          <Spacer $grow={168} />
          <PlainButton aria-label="Pannello ordini">
            <svg width="18" height="29" viewBox="0 0 18 29">
              <path d="M18 .5H8L.5 6v17L8 28.500h10" fill="#06060c" stroke="#4a4a4a" />
              <path d="M8 12v8l-4.500-4z" fill="#e0e0e0" />
              <path d="M16 5q-4 1-4 6" fill="none" stroke="#f05050" strokeWidth="2.500" /><path d="M8.500 10h7L12 15z" fill="#f05050" />
              <path d="M8 25q5 0 4.500-6" fill="none" stroke="#20c030" strokeWidth="2.500" /><path d="M9 20h7l-3.500-5z" fill="#20c030" />
            </svg>
          </PlainButton>
        </Toolbar>
        <ChartArea><Chart /></ChartArea>
        <BottomBar>
          <ShareButton>
            <svg width="17" height="17" viewBox="0 0 17 17" aria-hidden="true">
              <path d="M14 3L3 8.500 14 14" fill="none" stroke="#e8eef4" strokeWidth="1.500" />
              <circle cx="14" cy="3" r="2.600" fill="#e8eef4" /><circle cx="3" cy="8.500" r="2.600" fill="#e8eef4" /><circle cx="14" cy="14" r="2.600" fill="#e8eef4" />
            </svg>
            Condividi
          </ShareButton>
          <BarTool $width={26} aria-label="Collega grafici">
            <svg width="26" height="24" viewBox="0 0 26 24">
              <g fill="none" stroke="#c8c8c8" strokeWidth="2"><rect x="2" y="4" width="5" height="7" rx="2.500" /><rect x="2" y="12" width="5" height="8" rx="2.500" /><path d="M4.500 9v6" /></g>
              <path d="M14 6v12M20.500 1v17" stroke="#aaa" /><rect x="11.500" y="8" width="5" height="8" fill="#f07878" /><rect x="18" y="4" width="5" height="11" fill="#5ce05c" />
              <path d="M14 18h7l-3.500 4z" fill="#e8e8e8" />
            </svg>
          </BarTool>
          <BarTool $width={28} aria-label="Ordini">
            <svg width="16" height="18" viewBox="0 0 16 18">
              <rect x="1" y="1" width="14" height="16" fill="#4c545c" /><path d="M2.500 4.500h6M2.500 7.500h8M4 10.500h8M6 13.500h7" stroke="#aab" strokeWidth="1.300" />
              <path d="M8 1h7l-2 4z" fill="#e04040" /><path d="M1 17h7l-4-4z" fill="#20b020" />
            </svg>
          </BarTool>
          <BarTool $width={30} aria-label="Book">
            <svg width="18" height="18" viewBox="0 0 18 18">
              <path d="M1 1h8v3H1zM4 4h5v3H4zM1 7h8v4H1zM4 11h5v3H4zM2 14h7v3H2z" fill="#18b828" />
              <path d="M9 1h6v4H9zM9 5h8v3H9zM9 8h4v3H9zM9 11h8v3H9zM9 14h5v3H9z" fill="#f05858" />
              <path d="M1 4h14M4 7.500h12M1 11h14M4 14h10" stroke="#cfcfcf" strokeWidth=".7" />
            </svg>
          </BarTool>
          <ScrollBar>
            <ScrollButton aria-label="Scorri indietro"><svg width="8" height="10" viewBox="0 0 8 10"><path d="M6.500 1v8L2 5z" fill="#ddd" /></svg></ScrollButton>
            <ScrollTrack>
              <Spacer $grow={1260} />
              <ScrollThumb><Grip /></ScrollThumb>
              <Spacer $grow={9} />
            </ScrollTrack>
            <ScrollButton aria-label="Scorri avanti"><svg width="8" height="10" viewBox="0 0 8 10"><path d="M1.500 1v8L6 5z" fill="#ddd" /></svg></ScrollButton>
          </ScrollBar>
          <BarTool aria-label="Stile grafico">
            <svg width="20" height="24" viewBox="0 0 20 24">
              <path d="M15 1v21M5 10v12" stroke="#bbb" /><rect x="11" y="4" width="7" height="15" fill="#20d030" /><rect x="2" y="12" width="7" height="8" fill="none" stroke="#e06060" strokeWidth="1.500" />
              <path d="M4 19l7-7" stroke="#ddd" strokeWidth="3" /><path d="M10 7v4l3 2 4-2" fill="none" stroke="#ddd" strokeWidth="2" />
            </svg>
          </BarTool>
          <BarTool aria-label="Adatta zoom">
            <Zoom><circle cx="9.500" cy="9" r="5.500" fill="#68727e" /><circle cx="7.500" cy="7" r="2.500" fill="#a8b0b8" /><path d="M19.500 3v8M17.500 4.500l2-2.500 2 2.500M17.500 9.500l2 2.500 2-2.500M2 20h9M4 18l-2.500 2L4 22M9 18l2.500 2L9 22" fill="none" stroke={C} strokeWidth="1.400" /></Zoom>
          </BarTool>
          <BarTool aria-label="Riduci zoom"><Zoom><path d="M6.500 9h6" stroke={C} strokeWidth="2" /></Zoom></BarTool>
          <BarTool aria-label="Aumenta zoom"><Zoom><path d="M6.500 9h6M9.500 6v6" stroke={C} strokeWidth="2" /></Zoom></BarTool>
        </BottomBar>
      </Frame>
    </Desktop>
  );
}
